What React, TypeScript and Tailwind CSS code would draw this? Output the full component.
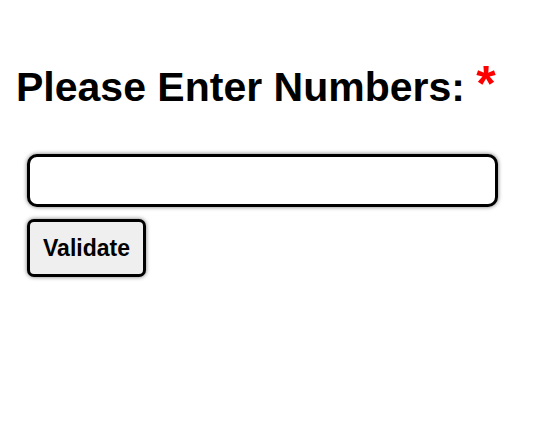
import { FC } from "react";

const App: FC = () => {
  return (
    <div className="min-h-screen bg-white px-4 pt-[61px] font-['Liberation_Sans',Arial,sans-serif] text-black">
      <h1 className="whitespace-nowrap text-[41px] font-bold leading-[47px]">
        Please Enter Numbers: <span className="text-[50px] text-[#ff0000]">*</span>
      </h1>
      <div className="mt-[43px] flex flex-col items-start gap-[12px] pl-[11px]">
        <input
          type="text"
          className="h-[53px] w-[471px] rounded-[10px] border-[3px] border-black bg-white px-3 text-[22px] shadow-[0_0_4px_rgba(0,0,0,0.55)] outline-none"
        />
        <button className="h-[58px] w-[119px] rounded-[7px] border-[3px] border-black bg-[#efefef] text-[23px] font-bold shadow-[0_0_4px_rgba(0,0,0,0.55)]">
          Validate
        </button>
      </div>
    </div>
  );
};

export default App;
